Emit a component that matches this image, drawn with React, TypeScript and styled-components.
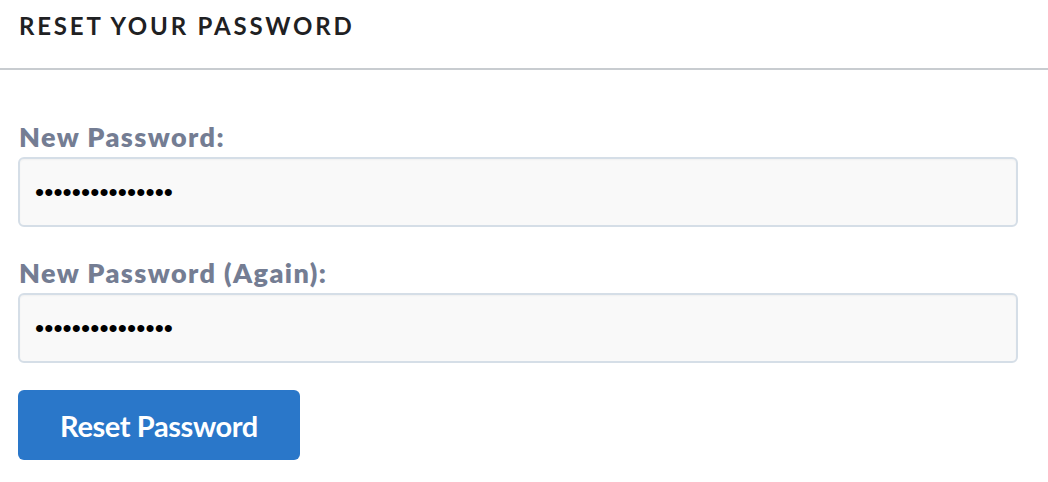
import React from "react";
import styled, { createGlobalStyle } from "styled-components";

const Global = createGlobalStyle`
  html, body { margin: 0; padding: 0; background: #fff; }
  body { font-family: Lato, "Open Sans", sans-serif; }
  * { box-sizing: border-box; }
`;

const Page = styled.div`
  width: 1048px;
  display: flex;
  flex-direction: column;
`;

const Header = styled.div`
  height: 70px;
  padding: 11px 19px 0;
  border-bottom: 2px solid #c8ccd0;
  display: flex;
  align-items: flex-start;
`;

const Title = styled.h1`
  margin: 0;
  font-family: Lato, sans-serif;
  font-weight: 700;
  font-size: 24px;
  letter-spacing: 2.8px;
  color: #1f2123;
  line-height: 30px;
`;

const Form = styled.form`
  display: flex;
  flex-direction: column;
  padding: 52px 30px 0 18px;
`;

const Field = styled.div<{ $after: number }>`
  display: flex;
  flex-direction: column;
  gap: 5px;
  margin-bottom: ${(p) => p.$after}px;
`;

const Label = styled.label`
  font-family: Lato, sans-serif;
  font-weight: 800;
  font-size: 27px;
  letter-spacing: 1.4px;
  color: #747d93;
  padding-left: 1px;
  line-height: 30px;
`;

const Input = styled.input`
  height: 70px;
  width: 1000px;
  border: 2px solid #d5dee7;
  border-radius: 6px;
  background: #f9f9f9;
  box-shadow: inset 0 1px 2px rgba(0, 0, 0, 0.04);
  padding: 0 15px;
  font-family: "Liberation Sans", Arial, sans-serif;
  font-size: 26px;
  letter-spacing: 0.1px;
  color: #000;
  outline: none;
`;

const Button = styled.button`
  align-self: flex-start;
  width: 282px;
  height: 70px;
  border: none;
  border-radius: 6px;
  background: #2a77c9;
  color: #fff;
  font-family: Lato, sans-serif;
  font-weight: 700;
  font-size: 29px;
  letter-spacing: -0.4px;
  cursor: pointer;
`;

export default function App() {
  return (
    <Page>
      <Global />
      <Header>
        <Title>RESET YOUR PASSWORD</Title>
      </Header>
      <Form onSubmit={(e) => e.preventDefault()}>
        <Field $after={31}>
          <Label htmlFor="p1">New Password:</Label>
          <Input id="p1" type="password" defaultValue="abcdefghijklmno" readOnly />
        </Field>
        <Field $after={27}>
          <Label htmlFor="p2">New Password (Again):</Label>
          <Input id="p2" type="password" defaultValue="abcdefghijklmno" readOnly />
        </Field>
        <Button type="submit">Reset Password</Button>
      </Form>
    </Page>
  );
}
